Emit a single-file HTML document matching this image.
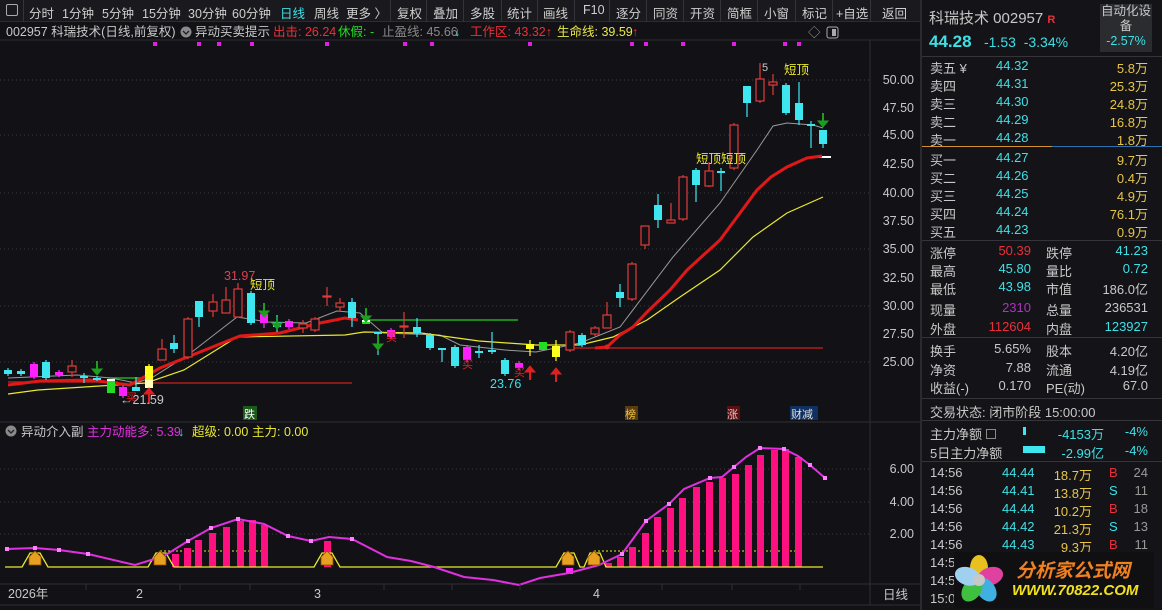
<!DOCTYPE html>
<html><head><meta charset="utf-8"><style>
*{margin:0;padding:0;box-sizing:border-box}
body{width:1162px;height:610px;background:#121216;overflow:hidden;position:relative;font-family:"Liberation Sans","Noto Sans CJK SC",sans-serif;color:#c8c8c8;font-size:13px}
.tb{position:absolute;left:0;top:0;width:920px;height:22px;background:#1a1a1e;border-bottom:1px solid #2c2c32;white-space:nowrap}
.tb span{position:absolute;top:3px;font-size:12.5px;color:#cfcfcf}
.tb i{position:absolute;top:0;width:1px;height:22px;background:#34343a}
.rp{position:absolute;left:920px;top:0;width:242px;height:610px;background:#141418;border-left:2px solid #2a2a30}
.r{position:absolute;font-size:13px;white-space:nowrap}
.sep{position:absolute;left:0;width:242px;height:1px;background:#34343a}
.c{color:#3ee0e6}.y{color:#e8c547}.rd{color:#e8303a}.w{color:#c8c8c8}
</style></head><body>
<div class="tb">
<span style="left:6px;top:4px;width:12px;height:12px;border:1px solid #aaa;border-radius:2px"></span>
<i style="left:23px"></i>
<span style="left:29px">分时</span><span style="left:62px">1分钟</span><span style="left:102px">5分钟</span><span style="left:142px">15分钟</span><span style="left:188px">30分钟</span><span style="left:232px">60分钟</span><span style="left:280px;color:#3ee0e6">日线</span><span style="left:314px">周线</span><span style="left:346px">更多 〉</span>
<i style="left:390px"></i><span style="left:397px">复权</span><i style="left:426px"></i><span style="left:433px">叠加</span><i style="left:463px"></i><span style="left:470px">多股</span><i style="left:501px"></i><span style="left:507px">统计</span><i style="left:537px"></i><span style="left:543px">画线</span><i style="left:574px"></i><span style="left:583px">F10</span><i style="left:609px"></i><span style="left:616px">逐分</span><i style="left:646px"></i><span style="left:653px">同资</span><i style="left:683px"></i><span style="left:690px">开资</span><i style="left:720px"></i><span style="left:727px">简框</span><i style="left:757px"></i><span style="left:764px">小窗</span><i style="left:795px"></i><span style="left:802px">标记</span><i style="left:832px"></i><span style="left:836px">+自选</span><i style="left:870px"></i><span style="left:882px">返回</span>
</div>
<svg style="position:absolute;left:0;top:22px" width="920" height="588" viewBox="0 22 920 588" font-family="Liberation Sans,Noto Sans CJK SC,sans-serif">
<rect x="0" y="22" width="920" height="588" fill="#121216"/>
<g font-size="12.5">
<text x="6" y="36" fill="#c8c8c8">002957 科瑞技术(日线,前复权)</text>
<circle cx="186" cy="32" r="5.5" fill="#8a8a8a"/><path d="M183 31l3 3 3-3" stroke="#222" fill="none" stroke-width="1.3"/>
<text x="195" y="36" fill="#c8c8c8">异动买卖提示</text>
<text x="273" y="36" fill="#e8303a">出击: 26.24</text>
<text x="338" y="36" fill="#22dd22">休假: -</text>
<text x="382" y="36" fill="#8a8a8a">止盈线: 45.66</text><text x="454" y="36" fill="#3ee0e6">↓</text>
<text x="470" y="36" fill="#e8303a">工作区: 43.32↑</text>
<text x="557" y="36" fill="#e8e84a">生命线: 39.59</text><text x="632" y="36" fill="#e8303a">↑</text>
<text x="808" y="37" fill="#999">◇</text><rect x="827" y="27" width="11" height="11" rx="2" fill="none" stroke="#aaa"/><rect x="832" y="29" width="4" height="7" fill="#aaa"/>
</g>
<line x1="0" y1="40" x2="920" y2="40" stroke="#2a2a30"/>
<g fill="#e020e0"><rect x="153" y="42" width="4" height="4"/><rect x="197" y="42" width="4" height="4"/><rect x="217" y="42" width="4" height="4"/><rect x="250" y="42" width="4" height="4"/><rect x="325" y="42" width="4" height="4"/><rect x="403" y="42" width="4" height="4"/><rect x="430" y="42" width="4" height="4"/><rect x="528" y="42" width="4" height="4"/><rect x="630" y="42" width="4" height="4"/><rect x="644" y="42" width="4" height="4"/><rect x="681" y="42" width="4" height="4"/><rect x="732" y="42" width="4" height="4"/><rect x="783" y="42" width="4" height="4"/><rect x="797" y="42" width="4" height="4"/></g>
<g stroke="#3a3a40" stroke-dasharray="1 3">
<line x1="0" y1="80" x2="870" y2="80"/><line x1="0" y1="135" x2="870" y2="135"/><line x1="0" y1="193" x2="870" y2="193"/><line x1="0" y1="249" x2="870" y2="249"/><line x1="0" y1="306" x2="870" y2="306"/><line x1="0" y1="362" x2="870" y2="362"/>
<line x1="0" y1="469" x2="870" y2="469"/><line x1="0" y1="502" x2="870" y2="502"/><line x1="0" y1="534" x2="870" y2="534"/>
</g>
<line x1="870" y1="40" x2="870" y2="605" stroke="#2e2e34"/>
<line x1="0" y1="422" x2="920" y2="422" stroke="#2e2e34"/>
<line x1="0" y1="584" x2="920" y2="584" stroke="#2e2e34"/>
<g fill="#c8c8c8" font-size="12.5" text-anchor="end">
<text x="914" y="84">50.00</text><text x="914" y="112">47.50</text><text x="914" y="139">45.00</text><text x="914" y="168">42.50</text><text x="914" y="197">40.00</text><text x="914" y="225">37.50</text><text x="914" y="253">35.00</text><text x="914" y="282">32.50</text><text x="914" y="310">30.00</text><text x="914" y="338">27.50</text><text x="914" y="366">25.00</text>
<text x="914" y="473">6.00</text><text x="914" y="506">4.00</text><text x="914" y="538">2.00</text>
</g>
<!-- level lines -->
<g stroke-width="1.3">
<line x1="8" y1="382" x2="118" y2="382" stroke="#d02020"/>
<line x1="130" y1="383" x2="352" y2="383" stroke="#d02020"/>
<line x1="108" y1="378" x2="140" y2="378" stroke="#22cc22"/>
<line x1="363" y1="320" x2="518" y2="320" stroke="#22cc22"/>
<line x1="570" y1="348" x2="823" y2="348" stroke="#d02020"/>
<line x1="813" y1="157" x2="831" y2="157" stroke="#fff" stroke-width="2"/>
</g>
<!-- MAs -->
<polyline fill="none" stroke="#9a9a9a" stroke-width="1" points="8,378 77,375 111,378 136,383 153,377 188,355 237,317 268,322 306,323 337,311 360,313 383,333 440,335 460,345 505,350 536,352 580,343 620,327 673,257 720,203 757,150 773,126 787,123 813,125 823,128"/>
<polyline fill="none" stroke="#e8e830" stroke-width="1.2" points="8,394 38,390 115,385 146,383 184,370 237,337 345,335 364,332 421,333 479,341 536,345 580,345 613,337 647,320 680,297 720,270 753,237 787,213 823,197"/>
<polyline fill="none" stroke="#e01818" stroke-width="3" points="8,385 40,381 90,380 130,385 160,368 200,352 240,336 280,333 320,323 345,318 358,320"/>
<polyline fill="none" stroke="#e01818" stroke-width="3" points="595,348 607,347 620,335 633,327 647,312 670,290 687,270 720,240 740,213 757,190 771,177 787,167 807,158 822,156"/>
<!-- wicks -->
<g stroke-width="1.2">
<path stroke="#3ee6f0" d="M8 368V376M21 369V376M84 373V383M97 376V381M136 377V391M174 335V353M199 301V327M277 315V332M352 298V327M378 332V355M417 318V337M442 348V362M479 345V358M492 332V354M505 358V376M620 284V307M658 194V228M696 168V202M721 168V191M747 86V117M799 82V125M811 121V148M823 130V148M46 360V380M251 291V325M430 333V350M455 345V368M582 333V347M786 83V115"/>
<path stroke="#e03a3a" d="M72 360V377M162 339V360M213 294V317M226 287V313M238 283V317M303 320V333M327 287V306M340 298V312M404 312V338M607 302V328M645 226V249M671 203V223M709 162V187M760 63V103M773 74V95M188 317V359M315 317V332M570 330V352M595 326V336M632 262V301M683 175V221M734 123V170"/>
<path stroke="#ff30ff" d="M59 370V377M264 305V328M34 362V379M123 385V398M289 319V329M391 328V339M467 345V362M519 361V370"/>
<path stroke="#ffff30" d="M530 340V356M556 340V361M149 364V390"/>
</g>
<!-- bodies -->
<g fill="#3ee6f0">
<rect x="4" y="370" width="8" height="4"/><rect x="17" y="371" width="8" height="3"/><rect x="42" y="362" width="8" height="16"/><rect x="80" y="376" width="8" height="2"/><rect x="93" y="378" width="8" height="2"/><rect x="132" y="387" width="8" height="4"/><rect x="170" y="343" width="8" height="6"/><rect x="195" y="301" width="8" height="16"/><rect x="247" y="293" width="8" height="30"/><rect x="273" y="322" width="8" height="5"/><rect x="348" y="302" width="8" height="16"/><rect x="374" y="332" width="8" height="2"/><rect x="413" y="327" width="8" height="6"/><rect x="426" y="335" width="8" height="13"/><rect x="438" y="348" width="8" height="2"/><rect x="451" y="347" width="8" height="19"/><rect x="475" y="351" width="8" height="2"/><rect x="488" y="350" width="8" height="2"/><rect x="501" y="360" width="8" height="14"/><rect x="578" y="335" width="8" height="10"/><rect x="616" y="292" width="8" height="6"/><rect x="654" y="205" width="8" height="15"/><rect x="692" y="170" width="8" height="15"/><rect x="717" y="171" width="8" height="2"/><rect x="743" y="86" width="8" height="17"/><rect x="782" y="85" width="8" height="28"/><rect x="795" y="103" width="8" height="17"/><rect x="807" y="124" width="8" height="2"/><rect x="819" y="130" width="8" height="14"/>
</g>
<g fill="#121216" stroke="#e03a3a" stroke-width="1.2">
<rect x="68" y="366" width="8" height="6"/><rect x="158" y="349" width="8" height="11"/><rect x="184" y="319" width="8" height="38"/><rect x="209" y="302" width="8" height="9"/><rect x="222" y="300" width="8" height="13"/><rect x="234" y="289" width="8" height="28"/><rect x="299" y="324" width="8" height="4"/><rect x="311" y="319" width="8" height="11"/><rect x="323" y="296" width="8" height="1"/><rect x="336" y="303" width="8" height="4"/><rect x="400" y="326" width="8" height="1"/><rect x="566" y="332" width="8" height="18"/><rect x="591" y="328" width="8" height="6"/><rect x="603" y="315" width="8" height="13"/><rect x="628" y="264" width="8" height="35"/><rect x="641" y="226" width="8" height="19"/><rect x="667" y="220" width="8" height="3"/><rect x="679" y="177" width="8" height="42"/><rect x="705" y="171" width="8" height="15"/><rect x="730" y="125" width="8" height="43"/><rect x="756" y="79" width="8" height="22"/><rect x="769" y="82" width="8" height="3"/>
</g>
<g fill="#ff20ff"><rect x="30" y="364" width="8" height="13"/><rect x="55" y="372" width="8" height="3"/><rect x="119" y="387" width="8" height="9"/><rect x="260" y="314" width="8" height="9"/><rect x="285" y="321" width="8" height="6"/><rect x="387" y="330" width="8" height="7"/><rect x="463" y="347" width="8" height="13"/><rect x="515" y="363" width="8" height="5"/></g>
<g fill="#ffff20"><rect x="145" y="366" width="8" height="22"/><rect x="526" y="344" width="8" height="5"/><rect x="552" y="346" width="8" height="11"/></g>
<g fill="#22dd22"><rect x="107" y="379" width="8" height="14"/><rect x="362" y="320" width="8" height="4"/><rect x="539" y="342" width="8" height="8"/></g>
<g fill="#fff"><rect x="107" y="379" width="8" height="2"/><rect x="362" y="320" width="8" height="2"/><rect x="145" y="380" width="8" height="8" opacity=".7"/></g>
<!-- arrows -->
<g fill="#1e9e1e" stroke="#1e9e1e"><path d="M97 361V371" stroke-width="2"/><path d="M92 369h10l-5 6z"/><path d="M264 303V313" stroke-width="2"/><path d="M259 311h10l-5 6z"/><path d="M277 317V325" stroke-width="2"/><path d="M272 323h10l-5 6z"/><path d="M366 308V318" stroke-width="2"/><path d="M361 316h10l-5 6z"/><path d="M378 335V346" stroke-width="2"/><path d="M373 344h10l-5 6z"/><path d="M823 113V123" stroke-width="2"/><path d="M818 121h10l-5 6z"/></g>
<g fill="#e02020" stroke="#e02020"><path d="M149 392V404" stroke-width="2"/><path d="M144 394h10l-5-6z"/><path d="M530 370V380" stroke-width="2"/><path d="M525 372h10l-5-6z"/><path d="M556 372V382" stroke-width="2"/><path d="M551 374h10l-5-6z"/></g>
<circle cx="607" cy="347" r="2.5" fill="#e02020"/>
<g font-size="12.5">
<text x="224" y="280" fill="#e04050">31.97</text>
<text x="250" y="289" fill="#e8e830">短顶</text>
<text x="120" y="404" fill="#c8c8c8">←21.59</text>
<text x="490" y="388" fill="#3ee0e6">23.76</text>
<text x="696" y="163" fill="#e8e830">短顶短顶</text>
<text x="784" y="74" fill="#e8e830">短顶</text>
<text x="762" y="71" fill="#c8c8c8" font-size="11">5</text>
<text x="386" y="341" fill="#e02020" font-size="11">买</text><text x="462" y="368" fill="#e02020" font-size="11">买</text><text x="514" y="376" fill="#e02020" font-size="11">买</text><text x="126" y="401" fill="#e02020" font-size="11">买</text>
</g>
<g font-size="11"><rect x="243" y="406" width="14" height="14" fill="#1a5a1a"/><text x="244" y="418" fill="#fff">跌</text>
<rect x="625" y="406" width="13" height="14" fill="#5a3a10"/><text x="625" y="418" fill="#e8c547">榜</text>
<rect x="727" y="406" width="13" height="14" fill="#5a1010"/><text x="727" y="418" fill="#e8c0c0">涨</text>
<rect x="790" y="406" width="28" height="14" fill="#103060"/><text x="791" y="418" fill="#e0e0e0">财减</text></g>
<!-- subchart -->
<g font-size="12.5">
<circle cx="11" cy="431" r="5.5" fill="#8a8a8a"/><path d="M8 430l3 3 3-3" stroke="#222" fill="none" stroke-width="1.3"/>
<text x="21" y="436" fill="#c8c8c8">异动介入副</text>
<text x="87" y="436" fill="#e030e0">主力动能多: 5.39</text><text x="178" y="436" fill="#3ee0e6">↓</text>
<text x="192" y="436" fill="#e8e830">超级: 0.00</text><text x="252" y="436" fill="#e8e830">主力: 0.00</text>
</g>
<g stroke="#e8e830" stroke-dasharray="2 2"><line x1="160" y1="551" x2="265" y2="551"/><line x1="594" y1="551" x2="800" y2="551"/></g>
<g fill="#ff1080">
<rect x="172" y="554" width="7" height="13"/><rect x="184" y="548" width="7" height="19"/><rect x="195" y="540" width="7" height="27"/><rect x="209" y="533" width="7" height="34"/><rect x="223" y="527" width="7" height="40"/><rect x="237" y="521" width="7" height="46"/><rect x="249" y="520" width="7" height="47"/><rect x="261" y="525" width="7" height="42"/>
<rect x="324" y="541" width="7" height="26"/><rect x="566" y="568" width="7" height="6" fill="#ff30ff"/>
<rect x="605" y="563" width="7" height="4"/><rect x="617" y="557" width="7" height="10"/><rect x="629" y="547" width="7" height="20"/><rect x="642" y="533" width="7" height="34"/><rect x="654" y="517" width="7" height="50"/><rect x="667" y="508" width="7" height="59"/><rect x="679" y="498" width="7" height="69"/><rect x="693" y="487" width="7" height="80"/><rect x="706" y="482" width="7" height="85"/><rect x="719" y="478" width="7" height="89"/><rect x="732" y="474" width="7" height="93"/><rect x="745" y="465" width="7" height="102"/><rect x="757" y="455" width="7" height="112"/><rect x="771" y="450" width="7" height="117"/><rect x="782" y="449" width="7" height="118"/><rect x="795" y="457" width="7" height="110"/>
</g>
<polyline fill="none" stroke="#e8e830" stroke-width="1.3" points="5,567 22,567 30,553 40,553 48,567 148,567 156,553 166,553 174,567 314,567 322,553 332,553 340,567 556,567 564,553 574,553 580,567 584,567 590,553 600,553 606,567 823,567"/>
<polyline fill="none" stroke="#e030e0" stroke-width="2" stroke-dasharray="" points="7,549 35,548 59,550 88,554 135,565 164,556 188,541 211,528 238,519 264,524 288,536 311,541 329,537 352,539 387,557 411,561 434,567 464,577 493,580 519,585 540,578 569,573 599,565 622,554 646,521 669,504 684,489 710,478 722,477 734,467 746,457 760,448 784,449 798,456 810,465 825,478"/>
<g fill="#ff80ff"><rect x="5" y="547" width="4" height="4"/><rect x="33" y="546" width="4" height="4"/><rect x="57" y="548" width="4" height="4"/><rect x="86" y="552" width="4" height="4"/><rect x="186" y="539" width="4" height="4"/><rect x="209" y="526" width="4" height="4"/><rect x="236" y="517" width="4" height="4"/><rect x="286" y="534" width="4" height="4"/><rect x="309" y="539" width="4" height="4"/><rect x="350" y="537" width="4" height="4"/><rect x="620" y="552" width="4" height="4"/><rect x="644" y="519" width="4" height="4"/><rect x="667" y="502" width="4" height="4"/><rect x="708" y="476" width="4" height="4"/><rect x="732" y="465" width="4" height="4"/><rect x="758" y="446" width="4" height="4"/><rect x="782" y="447" width="4" height="4"/><rect x="808" y="463" width="4" height="4"/><rect x="823" y="476" width="4" height="4"/></g>
<g fill="#e8a020" stroke="#8a4a00" stroke-width=".8"><path d="M35 551l-6 6v8h12v-8z"/><path d="M160 551l-6 6v8h12v-8z"/><path d="M327 551l-6 6v8h12v-8z"/><path d="M568 551l-6 6v8h12v-8z"/><path d="M594 551l-6 6v8h12v-8z"/></g>
<g font-size="12.5" fill="#c8c8c8"><text x="8" y="598">2026年</text><text x="136" y="598">2</text><text x="314" y="598">3</text><text x="593" y="598">4</text><text x="883" y="599">日线</text></g>
<g stroke="#2e2e34"><line x1="86" y1="584" x2="86" y2="590"/><line x1="180" y1="584" x2="180" y2="590"/><line x1="250" y1="584" x2="250" y2="590"/><line x1="384" y1="584" x2="384" y2="590"/><line x1="452" y1="584" x2="452" y2="590"/><line x1="520" y1="584" x2="520" y2="590"/><line x1="662" y1="584" x2="662" y2="590"/><line x1="732" y1="584" x2="732" y2="590"/><line x1="800" y1="584" x2="800" y2="590"/></g>
<line x1="0" y1="605" x2="920" y2="605" stroke="#2e2e34"/>
</svg>
<div class="rp">
<div class="r w" style="left:7px;top:7px;font-size:15px">科瑞技术 002957 <span style="color:#e8303a;font-size:11px;font-weight:bold">R</span></div>
<div style="position:absolute;left:178px;top:4px;width:52px;height:48px;background:#2a2c30;text-align:center;font-size:12.5px;line-height:15px;color:#c8c8c8">自动化设<br>备<br><span class="c">-2.57%</span></div>
<div class="r c" style="left:7px;top:32px;font-size:17px;font-weight:bold">44.28</div>
<div class="r c" style="left:62px;top:34px;font-size:14px">-1.53 &nbsp;-3.34%</div>
<div class="sep" style="top:56px"></div>
<div id="ob"></div>
<div class="sep" style="top:146px;width:130px;background:#d09030"></div><div class="sep" style="top:146px;left:130px;width:110px;background:#3070b0"></div>
<div class="sep" style="top:240px"></div><div class="sep" style="top:337px"></div><div class="sep" style="top:398px"></div><div class="sep" style="top:420px"></div><div class="sep" style="top:461px"></div>
<div class="r w" style="left:8px;top:58px">卖五 ¥</div><div class="r c" style="left:74px;top:58px">44.32</div><div class="r y" style="right:14px;top:58px">5.8万</div>
<div class="r w" style="left:8px;top:76px">卖四</div><div class="r c" style="left:74px;top:76px">44.31</div><div class="r y" style="right:14px;top:76px">25.3万</div>
<div class="r w" style="left:8px;top:94px">卖三</div><div class="r c" style="left:74px;top:94px">44.30</div><div class="r y" style="right:14px;top:94px">24.8万</div>
<div class="r w" style="left:8px;top:112px">卖二</div><div class="r c" style="left:74px;top:112px">44.29</div><div class="r y" style="right:14px;top:112px">16.8万</div>
<div class="r w" style="left:8px;top:130px">卖一</div><div class="r c" style="left:74px;top:130px">44.28</div><div class="r y" style="right:14px;top:130px">1.8万</div>
<div class="r w" style="left:8px;top:150px">买一</div><div class="r c" style="left:74px;top:150px">44.27</div><div class="r y" style="right:14px;top:150px">9.7万</div>
<div class="r w" style="left:8px;top:168px">买二</div><div class="r c" style="left:74px;top:168px">44.26</div><div class="r y" style="right:14px;top:168px">0.4万</div>
<div class="r w" style="left:8px;top:186px">买三</div><div class="r c" style="left:74px;top:186px">44.25</div><div class="r y" style="right:14px;top:186px">4.9万</div>
<div class="r w" style="left:8px;top:204px">买四</div><div class="r c" style="left:74px;top:204px">44.24</div><div class="r y" style="right:14px;top:204px">76.1万</div>
<div class="r w" style="left:8px;top:222px">买五</div><div class="r c" style="left:74px;top:222px">44.23</div><div class="r y" style="right:14px;top:222px">0.9万</div>
<div class="r w" style="left:8px;top:243px">涨停</div><div class="r rd" style="right:131px;top:243px">50.39</div><div class="r w" style="left:124px;top:243px">跌停</div><div class="r c" style="right:14px;top:243px">41.23</div>
<div class="r w" style="left:8px;top:261px">最高</div><div class="r c" style="right:131px;top:261px">45.80</div><div class="r w" style="left:124px;top:261px">量比</div><div class="r c" style="right:14px;top:261px">0.72</div>
<div class="r w" style="left:8px;top:279px">最低</div><div class="r c" style="right:131px;top:279px">43.98</div><div class="r w" style="left:124px;top:279px">市值</div><div class="r w" style="right:14px;top:279px">186.0亿</div>
<div class="r w" style="left:8px;top:300px">现量</div><div class="r" style="right:131px;top:300px;color:#b030c0">2310</div><div class="r w" style="left:124px;top:300px">总量</div><div class="r w" style="right:14px;top:300px">236531</div>
<div class="r w" style="left:8px;top:319px">外盘</div><div class="r rd" style="right:131px;top:319px">112604</div><div class="r w" style="left:124px;top:319px">内盘</div><div class="r c" style="right:14px;top:319px">123927</div>
<div class="r w" style="left:8px;top:341px">换手</div><div class="r w" style="right:131px;top:341px">5.65%</div><div class="r w" style="left:124px;top:341px">股本</div><div class="r w" style="right:14px;top:341px">4.20亿</div>
<div class="r w" style="left:8px;top:360px">净资</div><div class="r w" style="right:131px;top:360px">7.88</div><div class="r w" style="left:124px;top:360px">流通</div><div class="r w" style="right:14px;top:360px">4.19亿</div>
<div class="r w" style="left:8px;top:378px">收益(-)</div><div class="r w" style="right:131px;top:378px">0.170</div><div class="r w" style="left:124px;top:378px">PE(动)</div><div class="r w" style="right:14px;top:378px">67.0</div>
<div class="r w" style="left:8px;top:402px">交易状态: 闭市阶段 15:00:00</div>
<div class="r w" style="left:8px;top:424px">主力净额 <span style="display:inline-block;width:10px;height:10px;border:1px solid #888"></span></div><div style="position:absolute;left:101px;top:427px;width:3px;height:8px;background:#3ee6f0"></div><div class="r c" style="right:58px;top:424px">-4153万</div><div class="r c" style="right:14px;top:424px">-4%</div>
<div class="r w" style="left:8px;top:443px">5日主力净额</div><div style="position:absolute;left:101px;top:446px;width:22px;height:7px;background:#3ee6f0"></div><div class="r c" style="right:58px;top:443px">-2.99亿</div><div class="r c" style="right:14px;top:443px">-4%</div>
<div class="r w" style="left:8px;top:465px">14:56</div><div class="r c" style="left:80px;top:465px">44.44</div><div class="r y" style="right:70px;top:465px">18.7万</div><div class="r rd" style="left:187px;top:465px">B</div><div class="r" style="right:14px;top:465px;color:#999">24</div>
<div class="r w" style="left:8px;top:483px">14:56</div><div class="r c" style="left:80px;top:483px">44.41</div><div class="r y" style="right:70px;top:483px">13.8万</div><div class="r c" style="left:187px;top:483px">S</div><div class="r" style="right:14px;top:483px;color:#999">11</div>
<div class="r w" style="left:8px;top:501px">14:56</div><div class="r c" style="left:80px;top:501px">44.44</div><div class="r y" style="right:70px;top:501px">10.2万</div><div class="r rd" style="left:187px;top:501px">B</div><div class="r" style="right:14px;top:501px;color:#999">18</div>
<div class="r w" style="left:8px;top:519px">14:56</div><div class="r c" style="left:80px;top:519px">44.42</div><div class="r y" style="right:70px;top:519px">21.3万</div><div class="r c" style="left:187px;top:519px">S</div><div class="r" style="right:14px;top:519px;color:#999">13</div>
<div class="r w" style="left:8px;top:537px">14:56</div><div class="r c" style="left:80px;top:537px">44.43</div><div class="r y" style="right:70px;top:537px">9.3万</div><div class="r rd" style="left:187px;top:537px">B</div><div class="r" style="right:14px;top:537px;color:#999">11</div>
<div class="r w" style="left:8px;top:555px">14:5</div><div class="r w" style="left:8px;top:573px">14:5</div><div class="r w" style="left:8px;top:591px">15:0</div>
<div style="position:absolute;left:32px;top:552px;width:200px;height:56px;background:#101012"></div>
<svg style="position:absolute;left:30px;top:551px" width="60" height="58"><g transform="translate(27,29)"><ellipse rx="9" ry="13" cy="-12" fill="#e8c020"/><ellipse rx="9" ry="13" cy="-12" fill="#e040a0" transform="rotate(72)"/><ellipse rx="9" ry="13" cy="-12" fill="#40b0e0" transform="rotate(144)"/><ellipse rx="9" ry="13" cy="-12" fill="#40c040" transform="rotate(216)"/><ellipse rx="9" ry="13" cy="-12" fill="#a0d0f0" transform="rotate(288)"/><circle r="6" fill="#c8c8c8"/></g></svg>
<div class="r" style="left:94px;top:556px;font-size:19px;font-weight:bold;font-style:italic;color:#f08020">分析家公式网</div>
<div class="r" style="left:90px;top:582px;font-size:15px;font-weight:bold;font-style:italic;color:#f0e020">WWW.70822.COM</div>
</div>
</body></html>
